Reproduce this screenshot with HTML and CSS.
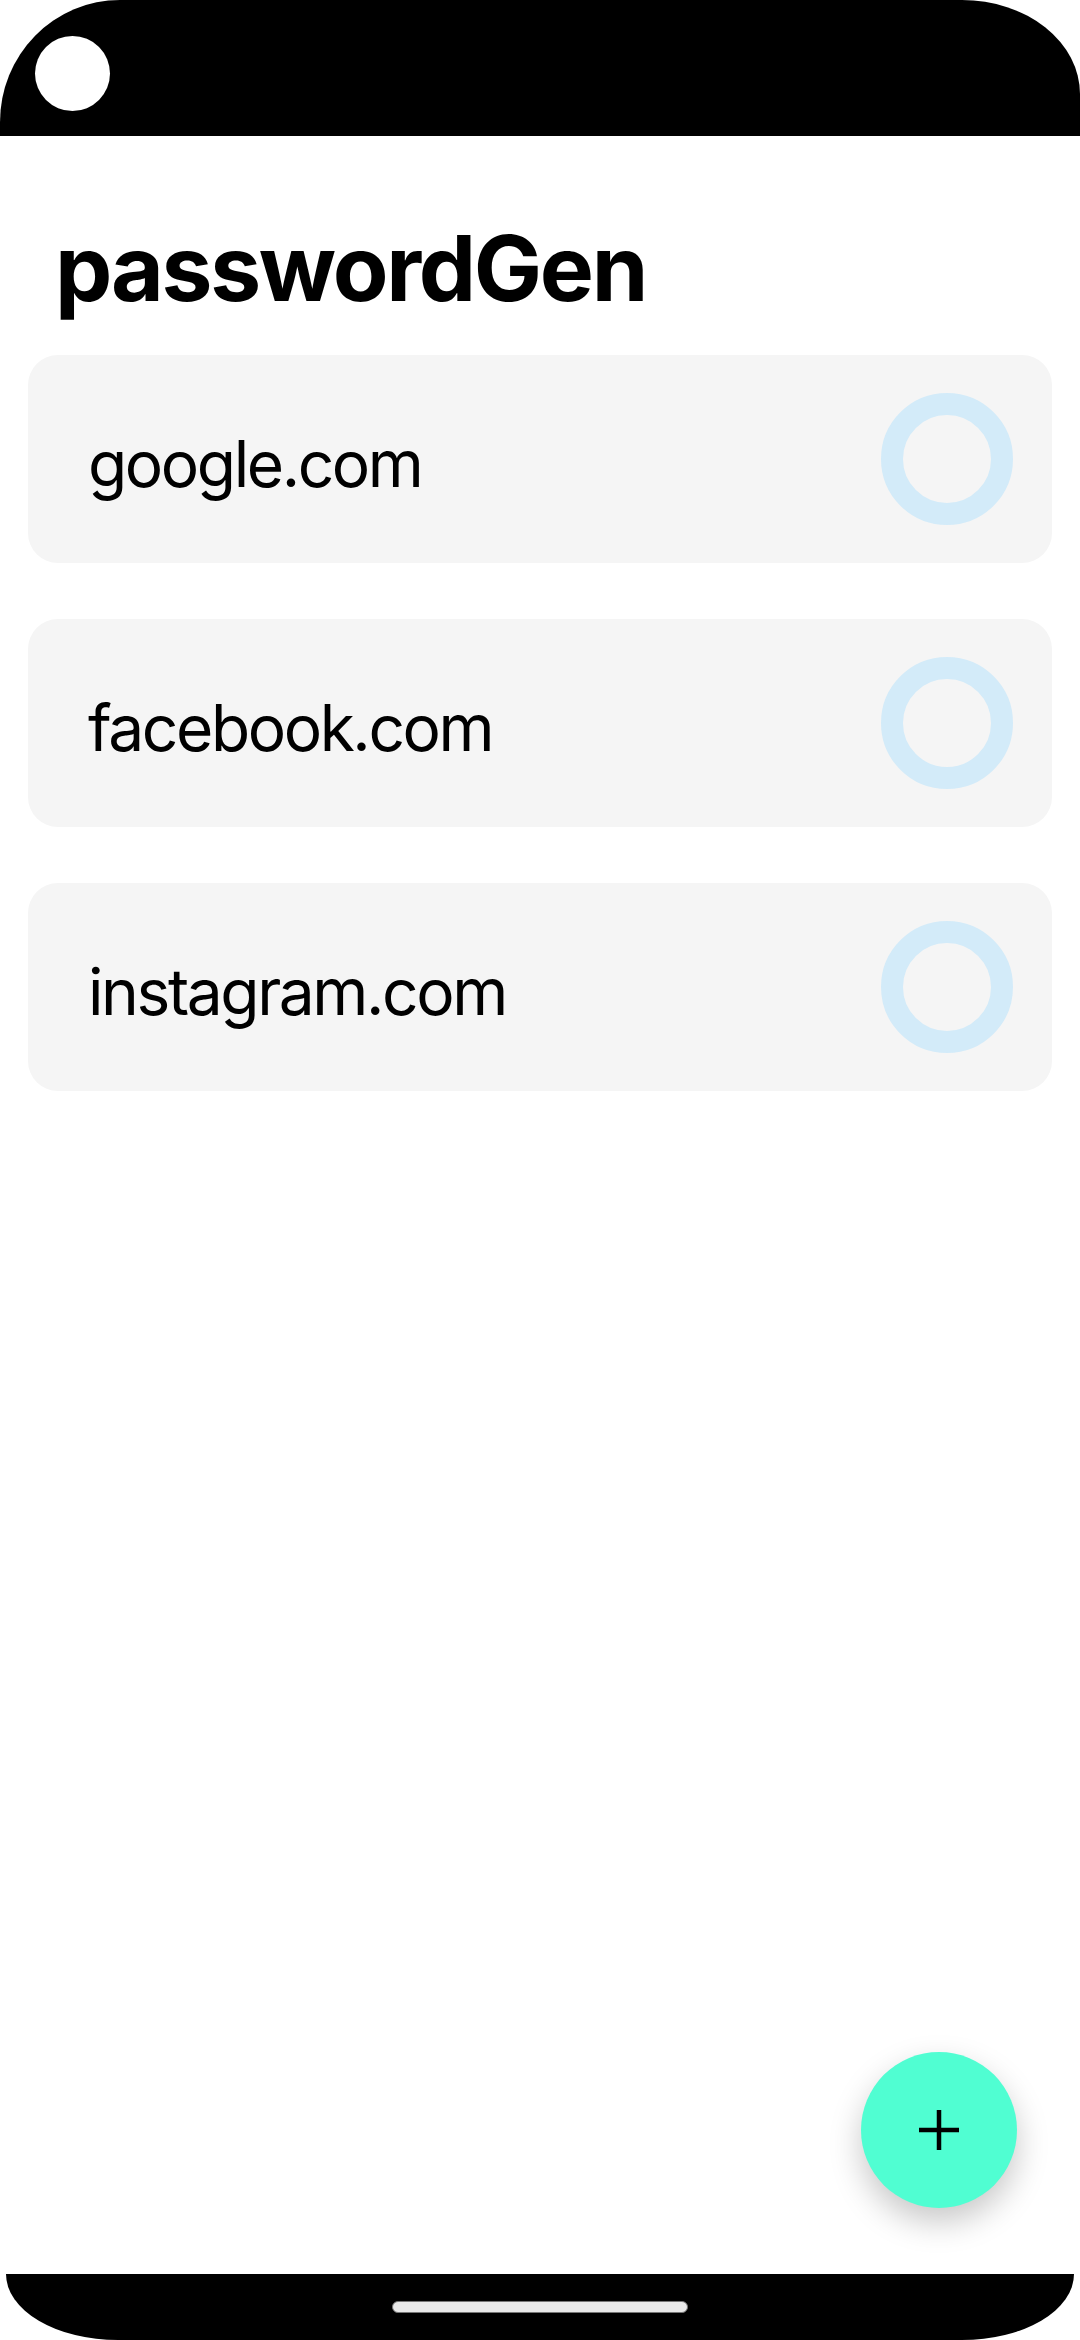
FILE: index.html
```html
<!DOCTYPE html>
<html lang="en">
<head>
<meta charset="utf-8">
<title>passwordGen</title>
<link rel="stylesheet" href="styles.css">
</head>
<body>
<div class="screen">
  <header class="topbar">
    <div class="camera"></div>
  </header>
  <main class="content">
    <h1 class="title">passwordGen</h1>
    <ul class="list">
      <li class="card"><span class="site">google.com</span><span class="ring"></span></li>
      <li class="card"><span class="site">facebook.com</span><span class="ring"></span></li>
      <li class="card"><span class="site">instagram.com</span><span class="ring"></span></li>
    </ul>
  </main>
  <footer class="bottombar">
    <div class="home-indicator"></div>
  </footer>
  <button class="fab" aria-label="Add">
    <svg width="42" height="42" viewBox="0 0 42 42"><path d="M21 1V41M1 21H41" stroke="#000" stroke-width="4.5" fill="none"/></svg>
  </button>
</div>
</body>
</html>
```
FILE: styles.css
```css
html, body {
  margin: 0;
  padding: 0;
  background: #fff;
}
.screen {
  position: relative;
  width: 1080px;
  height: 2340px;
  overflow: hidden;
  display: flex;
  flex-direction: column;
  font-family: Inter, "Liberation Sans", sans-serif;
  color: #000;
}
.topbar {
  height: 136px;
  flex: none;
  background: #000;
  border-radius: 120px 118px 0 0 / 122px 94px 0 0;
  display: flex;
  align-items: flex-start;
  padding: 36px 0 0 35px;
  box-sizing: border-box;
}
.camera {
  width: 75px;
  height: 75px;
  border-radius: 50%;
  background: #fff;
}
.content {
  flex: 1;
  display: flex;
  flex-direction: column;
}
.title {
  margin: 87px 0 0 55px;
  font-size: 91px;
  line-height: 1;
  font-weight: 700;
  letter-spacing: -2.3px;
}
.list {
  list-style: none;
  margin: 41px 0 0;
  padding: 0 28px;
  display: flex;
  flex-direction: column;
  gap: 56px;
}
.card {
  height: 208px;
  background: #f5f5f5;
  border-radius: 30px;
  display: flex;
  align-items: center;
  justify-content: space-between;
  padding: 0 39px 0 60px;
}
.site {
  font-size: 64px;
  letter-spacing: -2.4px;
  margin-top: 8px;
}
.ring {
  width: 132px;
  height: 132px;
  box-sizing: border-box;
  border: 22px solid #d3ebf9;
  border-radius: 50%;
}
.bottombar {
  flex: none;
  height: 66px;
  margin: 0 6px;
  background: #000;
  border-radius: 0 0 112px 112px / 0 0 66px 66px;
  display: flex;
  justify-content: center;
  padding-top: 27px;
  box-sizing: border-box;
}
.home-indicator {
  width: 296px;
  height: 12px;
  box-sizing: border-box;
  background: #e9e9e9;
  border: 1px solid #777;
  border-radius: 6px;
}
.fab {
  position: absolute;
  right: 63px;
  bottom: 132px;
  width: 156px;
  height: 156px;
  border: none;
  border-radius: 50%;
  background: #50fed2;
  box-shadow: 0 14px 32px rgba(0, 0, 0, 0.22);
  display: flex;
  align-items: center;
  justify-content: center;
  padding: 0;
}
```
